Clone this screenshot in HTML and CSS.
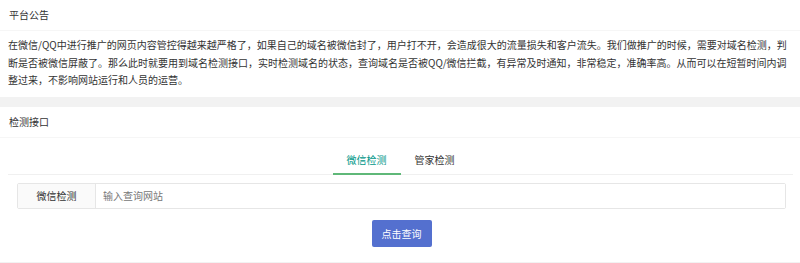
FILE: index.html
```html
<!DOCTYPE html>
<html lang="zh-CN">
<head>
<meta charset="utf-8">
<title>域名检测</title>
<link rel="stylesheet" href="styles.css">
</head>
<body>
<div class="card notice">
  <div class="card-header">平台公告</div>
  <div class="card-body">
    <p class="notice-text">在微信/QQ中进行推广的网页内容管控得越来越严格了，如果自己的域名被微信封了，用户打不开，会造成很大的流量损失和客户流失。我们做推广的时候，需要对域名检测，判断是否被微信屏蔽了。那么此时就要用到域名检测接口，实时检测域名的状态，查询域名是否被QQ/微信拦截，有异常及时通知，非常稳定，准确率高。从而可以在短暂时间内调整过来，不影响网站运行和人员的运营。</p>
  </div>
</div>
<div class="card check">
  <div class="card-header">检测接口</div>
  <div class="card-body">
    <div class="tabs">
      <ul class="tab-title">
        <li class="tab active">微信检测</li>
        <li class="tab">管家检测</li>
      </ul>
      <div class="tab-content">
        <div class="input-group">
          <label class="input-label">微信检测</label>
          <input class="input" type="text" placeholder="输入查询网站">
        </div>
        <div class="actions">
          <button class="btn" type="button">点击查询</button>
        </div>
      </div>
    </div>
  </div>
</div>
</body>
</html>
```
FILE: styles.css
```css
* { box-sizing: border-box; }
html, body {
  margin: 0;
  padding: 0;
  background: #f2f2f2;
  font-family: "Noto Sans CJK SC", "Noto Sans", "Liberation Sans", sans-serif;
  font-size: 10px;
  color: #333;
}
.card {
  background: #fff;
}
.notice { margin-bottom: 10px; }
.card-header {
  height: 31px;
  line-height: 30px;
  padding: 0 9px;
  border-bottom: 1px solid #f6f6f6;
  color: #333;
}
.notice .card-body {
  padding: 5px 8px 8px 8px;
}
.notice-text {
  margin: 0;
  line-height: 17.5px;
  color: #333;
}
.check .card-body {
  padding: 7px 7px 15px 8px;
}
.tab-title {
  list-style: none;
  margin: 0;
  padding: 0;
  height: 30px;
  display: flex;
  justify-content: center;
  border-bottom: 1px solid #f0f0f0;
}
.tab {
  padding: 0 14px;
  min-width: 68px;
  text-align: center;
  line-height: 29px;
  height: 30px;
  color: #333;
  cursor: pointer;
}
.tab.active {
  color: #009688;
  border-bottom: 2px solid #5fb878;
}
.tab-content {
  padding: 8px 7px 0 9px;
}
.input-group {
  display: flex;
  height: 26px;
  border: 1px solid #e6e6e6;
  border-radius: 2px;
}
.input-label {
  width: 78px;
  flex: none;
  background: #fafafa;
  border-right: 1px solid #e6e6e6;
  text-align: center;
  line-height: 24px;
  color: #333;
}
.input {
  flex: 1;
  border: none;
  outline: none;
  padding: 0 7px;
  font: inherit;
  color: #333;
  background: #fff;
}
.input::placeholder { color: #777; }
.actions {
  display: flex;
  justify-content: center;
  padding-top: 11px;
}
.btn {
  width: 60px;
  height: 27px;
  border: none;
  border-radius: 2px;
  background: #5470cf;
  color: #fff;
  font: inherit;
  padding: 0;
  cursor: pointer;
}
```
